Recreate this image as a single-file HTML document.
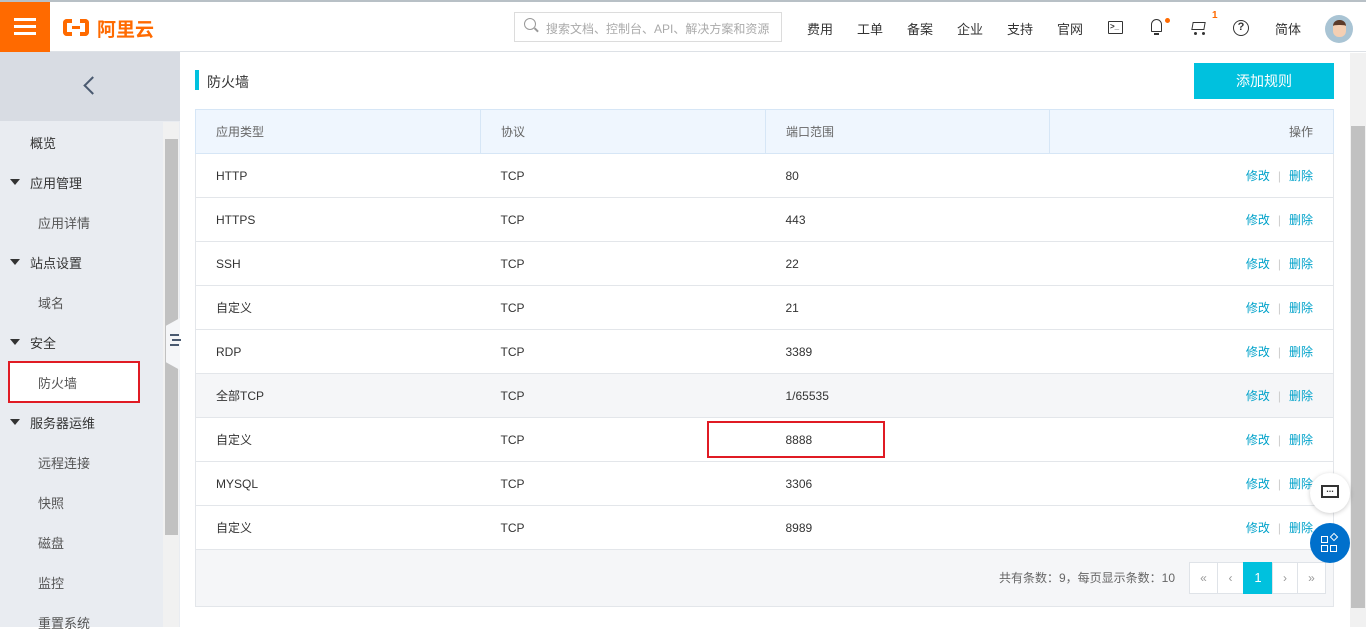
<!DOCTYPE html>
<html><head><meta charset="utf-8"><style>
*{margin:0;padding:0;box-sizing:border-box}
body{width:1366px;height:627px;overflow:hidden;background:#fff;font-family:"Liberation Sans","Noto Sans CJK SC",sans-serif;font-size:12px;color:#333;position:relative}
.abs{position:absolute}
.top{left:0;top:0;width:1366px;height:52px;background:#fff;border-top:2px solid #b8c0c6;border-bottom:1px solid #dde1e6}
.nav span{position:absolute;top:19px;font-size:13px;color:#333}
.side{left:0;top:52px;width:180px;height:575px;background:#e9ecf1}
.si{position:absolute;font-size:13px;color:#333}
.tri{position:absolute;width:0;height:0;border-left:5px solid transparent;border-right:5px solid transparent;border-top:6px solid #333}
table{border-collapse:collapse;position:absolute;left:195px;top:109px;width:1139px}
td,th{height:44px;border-bottom:1px solid #e3e6ea;font-weight:normal;text-align:left;padding-left:20px;font-size:12px;color:#333}
th{background:#eff6fe;border:1px solid #d6e6f6;color:#666}
td:first-child{border-left:1px solid #e3e6ea}td:last-child{border-right:1px solid #e3e6ea;text-align:right;padding-right:20px;color:#00a2ca}
th:last-child{text-align:right;padding-right:20px}
.sep{color:#ccc;margin:0 8px}
.pg{position:absolute;top:562px;height:32px;border:1px solid #dfe3e8;background:#fff;color:#999;text-align:center;line-height:30px;font-size:12px}
</style></head><body>
<div class="abs top"></div>
<div class="abs" style="left:0;top:2px;width:50px;height:50px;background:#ff6a00"></div>
<div class="abs" style="left:14px;top:18px;width:22px;height:3px;background:#fff;box-shadow:0 7px 0 #fff,0 14px 0 #fff"></div>
<div class="abs" style="left:63px;top:19px;width:9px;height:17px;border:4px solid #ff6a00;border-right:none;border-radius:4px 0 0 4px"></div>
<div class="abs" style="left:80px;top:19px;width:9px;height:17px;border:4px solid #ff6a00;border-left:none;border-radius:0 4px 4px 0"></div>
<div class="abs" style="left:72px;top:26px;width:8px;height:3px;background:#ff6a00"></div>
<div class="abs" style="left:97px;top:15px;font-size:19px;font-weight:bold;color:#ff6a00">阿里云</div>
<div class="abs" style="left:514px;top:12px;width:268px;height:30px;border:1px solid #dcdcdc"></div>
<div class="abs" style="left:524px;top:18px;width:12px;height:12px;border:1.5px solid #999;border-radius:50%"></div>
<div class="abs" style="left:534px;top:29px;width:5px;height:1.5px;background:#999;transform:rotate(45deg)"></div>
<div class="abs" style="left:546px;top:20px;font-size:12px;color:#aaa">搜索文档、控制台、API、解决方案和资源</div>
<div class="nav"><span style="left:807px">费用</span><span style="left:857px">工单</span><span style="left:907px">备案</span><span style="left:957px">企业</span><span style="left:1007px">支持</span><span style="left:1057px">官网</span><span style="left:1275px">简体</span></div>
<div class="abs" style="left:1108px;top:21px;width:15px;height:13px;border:1.5px solid #333;border-radius:1px;font-size:8px;line-height:9px;padding-left:1px;font-weight:bold">&gt;_</div>
<div class="abs" style="left:1151px;top:19px;width:11px;height:13px;border:1.5px solid #333;border-radius:6px 6px 1px 1px"></div>
<div class="abs" style="left:1154px;top:33px;width:5px;height:2px;background:#333"></div>
<div class="abs" style="left:1165px;top:18px;width:5px;height:5px;border-radius:50%;background:#ff6a00"></div>
<div class="abs" style="left:1192px;top:22px;width:13px;height:8px;border:1.5px solid #333;border-top-width:1.5px;transform:skewX(-10deg)"></div>
<div class="abs" style="left:1194px;top:32px;width:3px;height:3px;background:#333;border-radius:50%;box-shadow:8px 0 0 #333"></div>
<div class="abs" style="left:1212px;top:10px;font-size:10px;font-weight:bold;color:#ff6a00">1</div>
<div class="abs" style="left:1233px;top:20px;width:16px;height:16px;border:1.5px solid #333;border-radius:50%;font-size:11px;font-weight:bold;text-align:center;line-height:13px">?</div>
<div class="abs" style="left:1325px;top:15px;width:28px;height:28px;border-radius:50%;background:#a9c4d4;overflow:hidden"><div style="margin:5px auto 0;width:13px;height:17px;border-radius:6px;background:#f4cfb3;border-top:5px solid #5b3b2a"></div></div>

<div class="abs side"></div>
<div class="abs" style="left:0;top:52px;width:180px;height:69px;background:#d8dce3"></div>
<div class="abs" style="left:86px;top:79px;width:13px;height:13px;border-left:2.5px solid #4a5a70;border-bottom:2.5px solid #4a5a70;transform:rotate(45deg)"></div>
<div class="abs" style="left:8px;top:361px;width:132px;height:42px;background:#fff;border:2px solid #e01b24"></div>
<div class="si" style="left:30px;top:133px">概览</div>
<div class="tri" style="left:10px;top:179px"></div><div class="si" style="left:30px;top:173px">应用管理</div>
<div class="si" style="left:38px;top:213px;color:#555">应用详情</div>
<div class="tri" style="left:10px;top:259px"></div><div class="si" style="left:30px;top:253px">站点设置</div>
<div class="si" style="left:38px;top:293px;color:#555">域名</div>
<div class="tri" style="left:10px;top:339px"></div><div class="si" style="left:30px;top:333px">安全</div>
<div class="si" style="left:38px;top:373px;color:#555">防火墙</div>
<div class="tri" style="left:10px;top:419px"></div><div class="si" style="left:30px;top:413px">服务器运维</div>
<div class="si" style="left:38px;top:453px;color:#555">远程连接</div>
<div class="si" style="left:38px;top:493px;color:#555">快照</div>
<div class="si" style="left:38px;top:533px;color:#555">磁盘</div>
<div class="si" style="left:38px;top:573px;color:#555">监控</div>
<div class="si" style="left:38px;top:613px;color:#555">重置系统</div>
<div class="abs" style="left:163px;top:122px;width:16px;height:505px;background:#f1f1f1"></div>
<div class="abs" style="left:165px;top:139px;width:13px;height:396px;background:#c1c1c1"></div>
<div class="abs" style="left:166px;top:318px;width:14px;height:52px;background:#f5f6f8;clip-path:polygon(100% 0,100% 100%,0 85%,0 15%)"></div>
<div class="abs" style="left:170px;top:334px;width:9px;height:2px;background:#4a5a70;box-shadow:2px 5px 0 #4a5a70,0 10px 0 #4a5a70"></div>

<div class="abs" style="left:195px;top:70px;width:4px;height:20px;background:#00c1de"></div>
<div class="abs" style="left:207px;top:72px;font-size:14px;color:#333">防火墙</div>
<div class="abs" style="left:1194px;top:63px;width:140px;height:36px;background:#00c1de;color:#fff;font-size:14px;text-align:center;line-height:36px">添加规则</div>

<table>
<tr><th style="width:285px">应用类型</th><th style="width:285px">协议</th><th style="width:284px">端口范围</th><th>操作</th></tr>
<tr><td>HTTP</td><td>TCP</td><td>80</td><td>修改<span class="sep">|</span>删除</td></tr>
<tr><td>HTTPS</td><td>TCP</td><td>443</td><td>修改<span class="sep">|</span>删除</td></tr>
<tr><td>SSH</td><td>TCP</td><td>22</td><td>修改<span class="sep">|</span>删除</td></tr>
<tr><td>自定义</td><td>TCP</td><td>21</td><td>修改<span class="sep">|</span>删除</td></tr>
<tr><td>RDP</td><td>TCP</td><td>3389</td><td>修改<span class="sep">|</span>删除</td></tr>
<tr style="background:#f5f6f8"><td>全部TCP</td><td>TCP</td><td>1/65535</td><td>修改<span class="sep">|</span>删除</td></tr>
<tr><td>自定义</td><td>TCP</td><td>8888</td><td>修改<span class="sep">|</span>删除</td></tr>
<tr><td>MYSQL</td><td>TCP</td><td>3306</td><td>修改<span class="sep">|</span>删除</td></tr>
<tr><td>自定义</td><td>TCP</td><td>8989</td><td>修改<span class="sep">|</span>删除</td></tr>
</table>
<div class="abs" style="left:707px;top:421px;width:178px;height:37px;border:2px solid #e01b24"></div>
<div class="abs" style="left:195px;top:550px;width:1139px;height:57px;background:#f5f6f8;border:1px solid #e3e6ea;border-top:none"></div>
<div class="abs" style="left:999px;top:569px;color:#666">共有条数：9，每页显示条数：10</div>
<div class="pg" style="left:1189px;width:29px">«</div>
<div class="pg" style="left:1217px;width:27px">‹</div>
<div class="pg" style="left:1243px;width:30px;background:#00c1de;border-color:#00c1de;color:#fff;font-size:13px">1</div>
<div class="pg" style="left:1272px;width:26px">›</div>
<div class="pg" style="left:1297px;width:29px">»</div>

<div class="abs" style="left:1350px;top:53px;width:16px;height:574px;background:#f1f1f1"></div>
<div class="abs" style="left:1351px;top:126px;width:14px;height:482px;background:#c1c1c1"></div>
<div class="abs" style="left:1310px;top:473px;width:40px;height:40px;border-radius:50%;background:#fff;box-shadow:0 1px 5px rgba(0,0,0,.2)"></div>
<div class="abs" style="left:1321px;top:485px;width:18px;height:13px;border:2px solid #333;font-size:9px;line-height:5px;text-align:center;font-weight:bold">...</div>
<div class="abs" style="left:1310px;top:523px;width:40px;height:40px;border-radius:50%;background:#0070cc"></div>
<div class="abs" style="left:1321px;top:536px;width:7px;height:7px;border:1.5px solid #fff"></div>
<div class="abs" style="left:1321px;top:545px;width:7px;height:7px;border:1.5px solid #fff"></div>
<div class="abs" style="left:1330px;top:545px;width:7px;height:7px;border:1.5px solid #fff"></div>
<div class="abs" style="left:1331px;top:534px;width:6px;height:6px;border:1.5px solid #fff;transform:rotate(45deg)"></div>
</body></html>
